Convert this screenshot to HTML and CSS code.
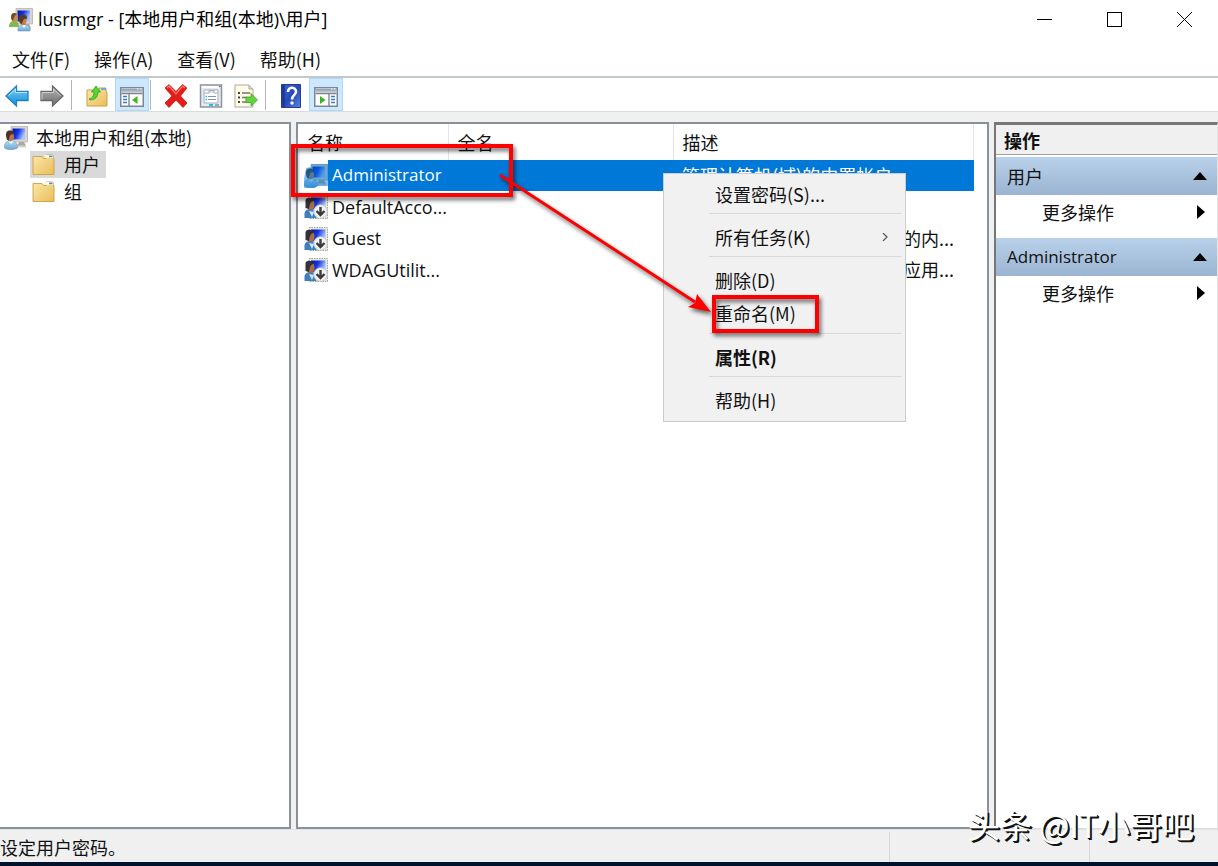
FILE: index.html
```html
<!DOCTYPE html>
<html lang="zh-CN">
<head>
<meta charset="utf-8">
<title>lusrmgr</title>
<link rel="stylesheet" href="styles.css">
</head>
<body>
<svg width="0" height="0" class="defs" aria-hidden="true">
  <defs>
    <linearGradient id="gScreen" x1="0" y1="0" x2="1" y2="0.4"><stop offset="0" stop-color="#0010a8"/><stop offset=".5" stop-color="#1737e0"/><stop offset="1" stop-color="#a9c4ff"/></linearGradient>
    <linearGradient id="gFolder" x1="0" y1="0" x2="1" y2="1"><stop offset="0" stop-color="#fce9ab"/><stop offset="1" stop-color="#e9bd58"/></linearGradient>
    <linearGradient id="gBlue" x1="0" y1="0" x2="0" y2="1"><stop offset="0" stop-color="#7fd0f7"/><stop offset="1" stop-color="#128ad8"/></linearGradient>
    <linearGradient id="gGray" x1="0" y1="0" x2="0" y2="1"><stop offset="0" stop-color="#b4b4b4"/><stop offset="1" stop-color="#6e6e6e"/></linearGradient>
    <linearGradient id="gShirt" x1="0" y1="0" x2="0" y2="1"><stop offset="0" stop-color="#b7dcf5"/><stop offset="1" stop-color="#6ba5d3"/></linearGradient>
    <linearGradient id="gHelp" x1="0" y1="0" x2="1" y2="1"><stop offset="0" stop-color="#4269cf"/><stop offset=".5" stop-color="#2449b8"/><stop offset="1" stop-color="#5b84e2"/></linearGradient>
    <symbol id="computer" viewBox="0 0 24 24">
      <path d="M7 .5h16.500v15.500H7z" fill="#d8d6cc" stroke="#b5b3aa" stroke-width=".8"/>
      <path d="M8.500 2.500h12.500v11H8.500z" fill="url(#gScreen)"/>
      <path d="M15 16h5l2 4H13z" fill="#aaa89f"/><path d="M12 19.500h10v2H12z" fill="#d5d3ca"/>
    </symbol>
    <symbol id="person" viewBox="0 0 24 24">
      <path d="M.5 22c-.4-4 1-6.500 4-7h4c4 .5 5.500 4 5 7-3 2-10 2.500-13 0z" fill="url(#gShirt)" stroke="#5c8fba" stroke-width=".5"/>
      <path d="M4.500 15l2.500 3 2.500-3z" fill="#f4fbff"/>
      <ellipse cx="6.500" cy="10.500" rx="3.500" ry="5" fill="#b87948"/>
      <path d="M2.300 11c-1-5 1-7 4-6.500 3 0 4 2 3.500 4-3-1-4 0-5 6-1.500 0-2.500-1.500-2.500-3.500z" fill="#493428"/>
    </symbol>
    <symbol id="user" viewBox="0 0 24 24"><use href="#computer"/><use href="#person"/></symbol>
    <symbol id="users" viewBox="0 0 24 24">
      <use href="#computer"/>
      <path d="M0 19c0-4 2-6 5-6s5 2 5 6z" fill="#80b94c"/><ellipse cx="5.500" cy="9.500" rx="3.200" ry="4.500" fill="#c98d50"/><path d="M2 9c0-4 3-5 6-3-2 1-3 3-4 7-1-1-2-2-2-4z" fill="#705028"/>
      <path d="M9 23c-.5-4 1-6 4-6h4c3 0 4.500 3 4 6z" fill="url(#gShirt)" stroke="#5c8fba" stroke-width=".5"/>
      <path d="M13 17l2 3 2-3z" fill="#fff"/><ellipse cx="14" cy="12.500" rx="3.600" ry="4.800" fill="#c18050"/><path d="M10 13c-1-5 2-7 5-6 3 0 3 2 3 4-3-1-4 0-5 5-1 0-2-1-3-3z" fill="#593b22"/>
    </symbol>
    <symbol id="disabled" viewBox="0 0 24 24">
      <path d="M5 .5h18.500v23H5z" fill="#e6e6e2" stroke="#8e8e8a" stroke-width=".8" stroke-dasharray="1.500 1"/>
      <path d="M7 2.500h14.500v12H7z" fill="url(#gScreen)"/>
      <path d="M.5 23v-5c1-3 3-4 5-4h3l4 4v5z" fill="#3f7fc0"/><path d="M5 16l3 6 2-5z" fill="#cfe6f6"/>
      <ellipse cx="6.500" cy="9.500" rx="4" ry="5.500" fill="#a96d45"/>
      <path d="M1.500 13V5c1-3 7-3 8.500 1-3 0-4 2-5 8z" fill="#33303c"/>
      <circle cx="16.500" cy="16.500" r="6.800" fill="#f1f1f1" stroke="#c5c5c5" stroke-width=".8"/>
      <path d="M16.500 12v7.500M12.500 16l4 4 4-4" fill="none" stroke="#3b3b3b" stroke-width="2.400"/>
    </symbol>
    <symbol id="folder" viewBox="0 0 24 24">
      <path d="M1 3.500h9l1.500 2H14V2h7v3l1 1v15.500H1z" fill="url(#gFolder)" stroke="#c79f4b" stroke-width=".9"/>
      <path d="M12.500 2h8.500v3h-8.500z" fill="#fff3c8"/><path d="M14 2.600h3.500v1.600H14z" fill="#fff"/><path d="M17 2.600h3.500v1.600H17z" fill="#418edc"/>
    </symbol>
    <symbol id="console" viewBox="0 0 24 20">
      <path d="M.75.750h22.500v18.500H.75z" fill="#fff" stroke="#7c8794" stroke-width="1.500"/>
      <path d="M1.500 3h21M1.500 6.500h21" stroke="#7c8794" stroke-width="1.400"/><path d="M1.500 4.700h21" stroke="#bbc3cf" stroke-width="2"/>
      <path d="M17 2h1.500M20 2h1.500" stroke="#fff" stroke-width="1"/>
    </symbol>
  </defs>
</svg>

<header class="titlebar">
  <svg class="icon"><use href="#users"/></svg>
  <h1>lusrmgr - [本地用户和组(本地)\用户]</h1>
  <div class="window-buttons">
    <button aria-label="最小化"><svg width="15" height="15" viewBox="0 0 15 15"><path d="M0 7.500h15"/></svg></button>
    <button aria-label="最大化"><svg width="15" height="15" viewBox="0 0 15 15"><path d="M.5.500h14v14H.5z"/></svg></button>
    <button aria-label="关闭"><svg width="15" height="15" viewBox="0 0 15 15"><path d="M0 0l15 15M15 0L0 15"/></svg></button>
  </div>
</header>

<nav class="menubar">
  <button>文件(F)</button><button>操作(A)</button><button>查看(V)</button><button>帮助(H)</button>
</nav>

<div class="toolbar" role="toolbar">
  <button aria-label="后退"><svg class="icon" viewBox="0 0 24 24"><path d="M1 12L11.500 2v5.500h11.500v9H11.500V22z" fill="url(#gBlue)" stroke="#1c82c4" stroke-width="1.300"/><path d="M3.500 11.500L10.500 5v3.500h11.500" fill="none" stroke="#b5e6fc"/></svg></button>
  <button aria-label="前进"><svg class="icon" viewBox="0 0 24 24"><path d="M23 12L12.500 2v5.500H1v9h11.500V22z" fill="url(#gGray)" stroke="#686868" stroke-width="1.300"/><path d="M20.500 11.500L13.500 5v3.500H2v7" fill="none" stroke="#ccc"/></svg></button>
  <span class="divider"></span>
  <button class="spaced" aria-label="向上"><svg class="icon" viewBox="0 0 24 24"><path d="M2 6h8l2 2h2V4h7v3l1 1v14H2z" fill="url(#gFolder)" stroke="#c79f4b"/><path d="M16 4h5v2h-5z" fill="#6da9e5"/><path d="M4 15c4-1 5-4 5-7H6.500L11 2l4.500 6H13c0 5-3 8-8 8z" fill="#55d337" stroke="#2ba220" stroke-width=".8"/></svg></button>
  <button class="active" aria-label="显示控制台树" aria-pressed="true"><svg class="console" viewBox="0 0 24 20"><use href="#console"/><path d="M9 7v12" stroke="#7c8794" stroke-width="1.400"/><path d="M3 9.500h4M3 12.500h4M3 15.500h4" stroke="#3979c1" stroke-width="1.500"/><path d="M17.500 9v8L12 13z" fill="#3eb51f"/></svg></button>
  <span class="divider near"></span>
  <button class="spaced" aria-label="删除"><svg class="icon" viewBox="0 0 24 24"><path d="M1 4l4-3.500 7 7 6.500-7L23 4l-6.500 8 6.500 7-4 4.500-7-7.500-7 7.500L1 19l7-7z" fill="#e71c19" stroke="#b70d0e" stroke-width=".7"/><path d="M3 4l2-2 7 8 6.500-8L21 4" fill="none" stroke="#ff7c70" stroke-width="1.200"/></svg></button>
  <button aria-label="属性"><svg class="icon" viewBox="0 0 24 24"><path d="M1.500 1h21v22h-21z" fill="#e7ebf1" stroke="#8d949e" stroke-width="1.500"/><path d="M2.500 3h17" stroke="#fff" stroke-width="2"/><path d="M20 2.500h1.500" stroke="#666" stroke-width="1.200"/><path d="M5 6h14v13H5z" fill="#fff" stroke="#a4afbd"/><path d="M5 9h5V6.500h5V9h4" fill="#dce4ef" stroke="#a4afbd"/><path d="M9 12.500h8M9 15.500h8" stroke="#8094aa" stroke-width="1.200"/><path d="M6.500 12.500h1.500M6.500 15.500h1.500" stroke="#23b6e4" stroke-width="1.500"/><path d="M10 21h4" stroke="#17bee9" stroke-width="2"/><path d="M16 21h4" stroke="#9da6b2" stroke-width="2"/></svg></button>
  <button aria-label="导出列表"><svg class="icon" viewBox="0 0 24 24"><path d="M1 1h14l4 4v18H1z" fill="#fffbe9" stroke="#aaa796"/><path d="M15 1v4h4" fill="#e4e0ce" stroke="#aaa796"/><path d="M4 9h2M4 13.500h2M4 18h2" stroke="#45423c" stroke-width="2"/><path d="M8 9h8M8 13.500h5M8 18h5" stroke="#77736b" stroke-width="1.400"/><path d="M12 13h5V9.500l6.500 6.500-6.500 6v-3.500h-5z" fill="#65d33d" stroke="#36a323" stroke-width=".8"/></svg></button>
  <span class="divider"></span>
  <button class="spaced" aria-label="帮助"><svg class="icon" viewBox="0 0 24 24"><path d="M2.500.500h19v23h-19z" fill="url(#gHelp)" stroke="#223d93"/><path d="M3 1h3v22H3z" fill="#1d399c"/><path d="M9 8c0-6 8.500-5.500 8 0-.3 3-4 3-4 7.500" fill="none" stroke="#fff" stroke-width="2.600"/><circle cx="13" cy="19" r="1.700" fill="#fff"/></svg></button>
  <button class="active" aria-label="显示操作窗格" aria-pressed="true"><svg class="console" viewBox="0 0 24 20"><use href="#console"/><path d="M15 7v12" stroke="#7c8794" stroke-width="1.400"/><path d="M17 9.500h4M17 12.500h4M17 15.500h4" stroke="#3979c1" stroke-width="1.500"/><path d="M6 9v8l5.500-4z" fill="#3eb51f"/></svg></button>
</div>

<main class="workspace">
  <section class="pane tree" aria-label="控制台树">
    <div class="root"><svg class="icon"><use href="#user"/></svg><span>本地用户和组(本地)</span></div>
    <ul>
      <li class="selected"><svg class="icon"><use href="#folder"/></svg><span>用户</span></li>
      <li><svg class="icon"><use href="#folder"/></svg><span>组</span></li>
    </ul>
  </section>

  <section class="pane list">
    <table>
      <colgroup><col class="col-name"><col class="col-full"><col class="col-desc"></colgroup>
      <thead><tr><th>名称</th><th>全名</th><th>描述</th></tr></thead>
      <tbody>
        <tr class="selected"><td><div class="name"><svg class="icon"><use href="#user"/><path class="tint" d="M7 0h17v22H13l-2 2H0V15l2-11 5-1z"/></svg><span>Administrator</span></div></td><td></td><td>管理计算机(域)的内置帐户</td></tr>
        <tr><td><div class="name"><svg class="icon"><use href="#disabled"/></svg><span>DefaultAcco...</span></div></td><td></td><td></td></tr>
        <tr><td><div class="name"><svg class="icon"><use href="#disabled"/></svg><span>Guest</span></div></td><td></td><td class="clipped">的内...</td></tr>
        <tr><td><div class="name"><svg class="icon"><use href="#disabled"/></svg><span>WDAGUtilit...</span></div></td><td></td><td class="clipped">应用...</td></tr>
      </tbody>
    </table>
  </section>

  <aside class="actions">
    <h2>操作</h2>
    <h3>用户<svg width="14" height="8" viewBox="0 0 14 8"><path d="M0 8l7-8 7 8z"/></svg></h3>
    <button class="more">更多操作<svg width="8" height="14" viewBox="0 0 8 14"><path d="M0 0l8 7-8 7z"/></svg></button>
    <h3 class="latin">Administrator<svg width="14" height="8" viewBox="0 0 14 8"><path d="M0 8l7-8 7 8z"/></svg></h3>
    <button class="more">更多操作<svg width="8" height="14" viewBox="0 0 8 14"><path d="M0 0l8 7-8 7z"/></svg></button>
  </aside>
</main>

<footer class="statusbar"><span class="message">设定用户密码。</span><span></span><span></span></footer>

<div class="context-menu" role="menu">
  <button role="menuitem">设置密码(S)...</button>
  <hr>
  <button role="menuitem">所有任务(K)<svg width="6" height="8" viewBox="0 0 6 8"><path d="M1 0l4 4-4 4" fill="none" stroke="#555" stroke-width="1.200"/></svg></button>
  <hr>
  <button role="menuitem">删除(D)</button>
  <button role="menuitem">重命名(M)</button>
  <hr>
  <button role="menuitem" class="default">属性(R)</button>
  <hr>
  <button role="menuitem">帮助(H)</button>
</div>

<svg class="annotation" width="560" height="220" viewBox="0 0 560 220" aria-hidden="true">
  <path d="M12 25h218v49H12z" fill="none" stroke="#f00" stroke-width="4"/>
  <path d="M433 176h103v34H433z" fill="none" stroke="#f00" stroke-width="4"/>
  <path d="M219 54L414 181" stroke="#f00" stroke-width="3"/>
  <path d="M430 191l-23-5 7-4 2-9z" fill="#f00"/>
</svg>
<div class="watermark">头条 @IT小哥吧</div>
</body>
</html>
```
FILE: styles.css
```css
* { box-sizing: border-box; }
body {
  margin: 0;
  height: 100vh;
  display: flex;
  flex-direction: column;
  overflow: hidden;
  position: relative;
  background: #f0f0f0;
  color: #111;
  font: 18px/24px "Noto Sans CJK SC", sans-serif;
  border-bottom: 4px solid #00112b;
}
.defs { position: absolute; }
button { border: 0; padding: 0; background: none; color: inherit; font: inherit; }
.icon { width: 24px; height: 24px; flex: none; display: block; }

.titlebar { height: 39px; flex: none; display: flex; align-items: center; background: #fff; padding-left: 9px; color: #000; }
.titlebar h1 { margin: 0 auto 0 5px; padding-bottom: 2px; font-size: 18px; font-weight: 400; font-family: "Open Sans", "Noto Sans CJK SC", sans-serif; }
.window-buttons { display: flex; }
.window-buttons button { width: 70px; height: 39px; padding-left: 3px; display: grid; place-items: center; }
.window-buttons svg { fill: none; stroke: #000; stroke-width: 1; }
.window-buttons button:nth-child(-n+2) svg { shape-rendering: crispEdges; }

.menubar { height: 37px; flex: none; display: flex; align-items: center; gap: 24px; padding: 2px 12px 0; background: #fff; }

.toolbar { height: 36px; flex: none; display: flex; align-items: center; background: #fff; border-top: 2px solid #c3c8ca; border-bottom: 1px solid #dcdcdc; }
.toolbar button { width: 34px; height: 33px; padding-top: 2px; display: grid; place-items: center; }
.toolbar button + button { margin-left: 1px; }
.toolbar .active { background: #cce8ff; border: 1px solid #b0d9f8; }
.toolbar .console { width: 24px; height: 20px; margin-top: 2px; }
.divider { width: 1px; height: 30px; background: #b5b5b5; margin-left: 2px; }
.divider.near { margin-left: 1px; }
.spaced { margin-left: 8px; }

.workspace { flex: 1; min-height: 0; display: flex; gap: 5px; padding-top: 10px; }
.pane { background: #fff; border: 2px solid #8a919b; }
.tree { flex: 0 0 291px; border-left: 0; padding: 0 0 0 4px; }
.root, .tree li { display: flex; align-items: center; height: 27px; }
.root span, .tree li span { padding-bottom: 2px; }
.root { gap: 8px; }
.tree ul { list-style: none; margin: 0; padding: 0 0 0 26px; }
.tree li { width: max-content; gap: 8px; padding: 0 6px 0 2px; }
.tree li.selected { background: #d9d9d9; }

.list { flex: 1; min-width: 0; }
.list table { table-layout: fixed; width: 676px; border-collapse: collapse; }
.col-name { width: 150px; }
.col-full { width: 225px; }
.list th { height: 36px; padding: 0 0 0 9px; text-align: left; font-weight: 400; border-right: 1px solid #e5e5e5; }
.list td { height: 31px; padding: 0 0 2px 9px; white-space: nowrap; }
.list tr:nth-child(even) td { height: 32px; }
.list td:first-child { padding: 0 0 0 6px; }
.name { display: flex; align-items: stretch; height: 31px; font: 18px/30px "Open Sans", sans-serif; }
.name .icon { align-self: center; }
.name span { flex: 1; padding-left: 4px; }
.list tr.selected { color: #fff; }
.list tr.selected td { background: #0078d7; }
.list tr.selected td:first-child { background: #fff; }
.list tr.selected .name { font-size: 17px; }
.list tr.selected .name span { background: #0078d7; }
.tint { fill: #0078d7; opacity: .5; }
.list .clipped { padding-left: 230px; }

.actions { flex: 0 0 224px; background: #fff; border: 2px solid #777; border-top-width: 3px; border-right: 1px solid #e3e3e3; border-bottom: 1px solid #ddd; }
.actions h2, .actions h3 { margin: 0; font-size: 18px; display: flex; align-items: center; }
.actions h2 { height: 30px; padding-left: 8px; background: #f0f0f0; border-bottom: 1px solid #a0a0a0; margin-bottom: 2px; }
.actions h3 { height: 38px; padding: 0 10px 0 11px; font-weight: 400; justify-content: space-between; background: linear-gradient(#b9d1ea, #9ab4d2); }
.actions h3.latin { font: 17px/24px "Open Sans", sans-serif; }
.more { width: 100%; height: 33px; margin-bottom: 10px; padding: 0 12px 0 46px; display: flex; align-items: center; justify-content: space-between; }

.statusbar { height: 33px; flex: none; display: flex; border-top: 1px solid #e2e2e2; padding: 2px 1px 0 0; line-height: 31px; }
.statusbar .message { flex: 1; }
.statusbar span + span { width: 200px; border-left: 1px solid #d9d9d9; }
.statusbar span:last-child { width: 128px; }

.context-menu { position: absolute; left: 663px; top: 173px; width: 243px; padding: 4px 3px; background: #f1f1f1; border: 1px solid #ccc; color: #111; }
.context-menu button { width: 100%; height: 33px; padding: 0 14px 2px 48px; display: flex; align-items: center; justify-content: space-between; }
.context-menu hr { height: 1px; margin: 2px 0 7px 42px; border: 0; background: #d9d9d9; }
.context-menu button + button + hr { margin-top: 3px; }
.context-menu .default { font-weight: 700; }

.annotation { position: absolute; left: 281px; top: 121px; filter: drop-shadow(2px 3px 2px rgba(0, 0, 0, .6)); pointer-events: none; }
.watermark { position: absolute; right: 24px; bottom: 18px; font: 32px/40px "Noto Sans CJK SC", sans-serif; color: #fff; text-shadow: 1px 1px 0 #111, 2px 2px 0 #111; }
```
